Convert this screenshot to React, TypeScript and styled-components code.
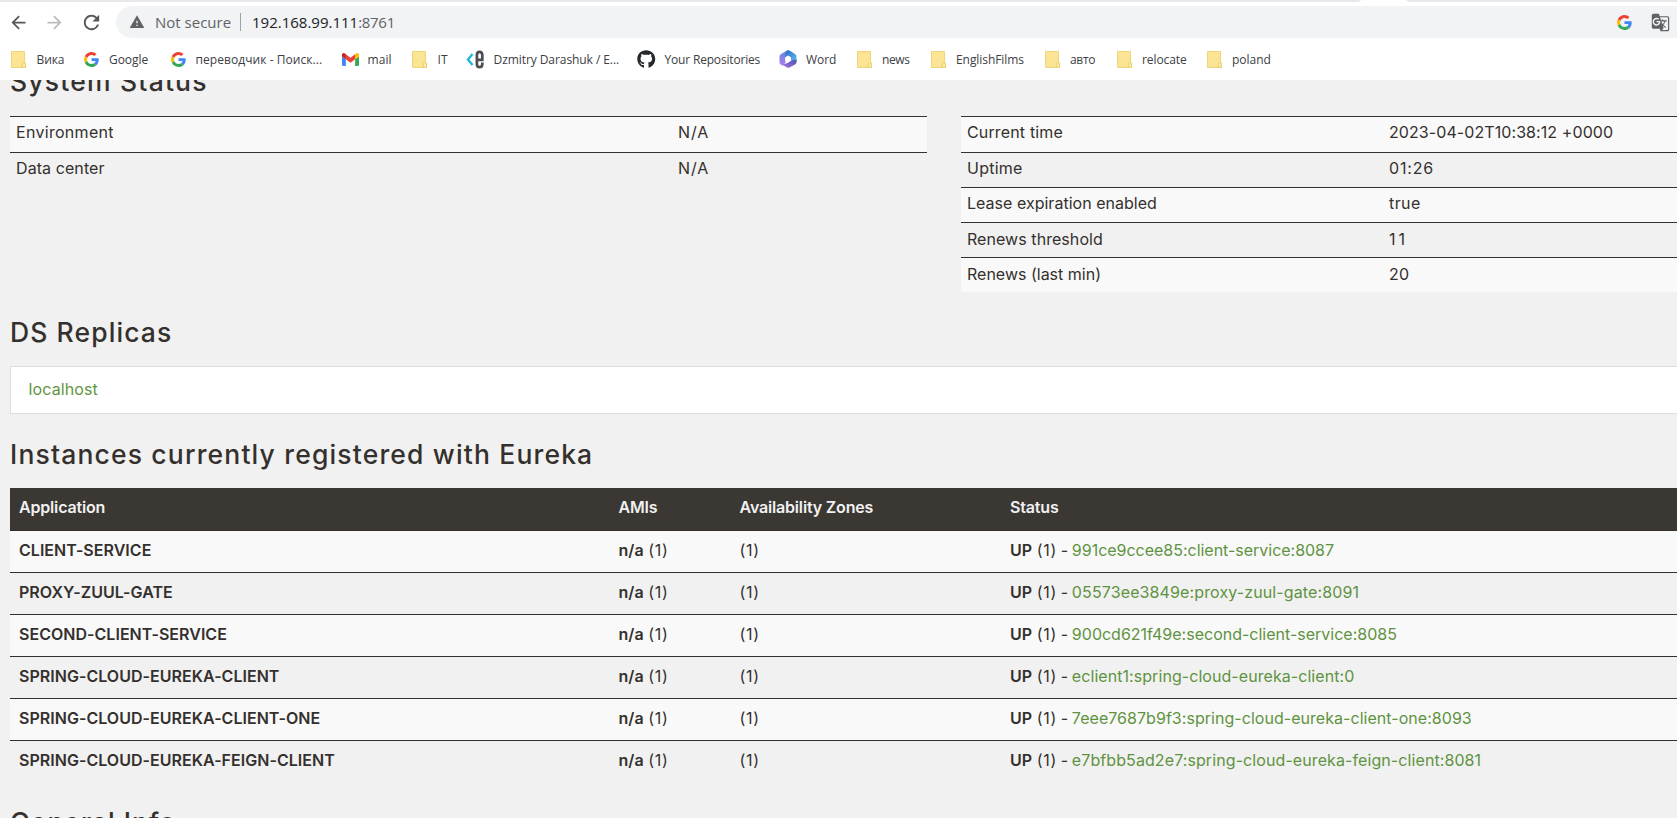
import React from "react";
import styled, { createGlobalStyle } from "styled-components";
import { MdArrowBack, MdArrowForward, MdRefresh, MdWarning, MdGTranslate } from "react-icons/md";
import { FaGithub } from "react-icons/fa";

const GlobalStyle = createGlobalStyle`
  * { box-sizing: border-box; }
  body {
    margin: 0;
    background: #f1f1f1;
    overflow: hidden;
  }
`;

const Window = styled.div`
  width: 100%;
  height: 818px;
  display: flex;
  flex-direction: column;
  overflow: hidden;
`;

/* ---------- browser chrome ---------- */

const Chrome = styled.header`
  height: 80px;
  flex: none;
  background: #fff;
  font-family: "Open Sans", "Noto Sans", sans-serif;
`;

const TabStrip = styled.div`
  display: flex;
  height: 2px;
  justify-content: space-between;
`;

const StripPart = styled.div<{ $side: "left" | "right" }>`
  width: ${(p) => (p.$side === "left" ? "1361px" : "271px")};
  background: #e7e8eb;
  border-radius: ${(p) => (p.$side === "left" ? "0 0 6px 0 / 0 0 2px 0" : "0 0 0 6px / 0 0 0 2px")};
`;

const Toolbar = styled.div`
  display: flex;
  align-items: center;
  height: 40px;
`;

const NavButton = styled.span<{ $faded?: boolean }>`
  display: flex;
  justify-content: center;
  width: 36.5px;
  color: ${(p) => (p.$faded ? "#babcbe" : "#54575b")};
`;

const NavGroup = styled.div`
  display: flex;
  align-items: center;
  width: 116px;
`;

const AddressBar = styled.div`
  display: flex;
  align-items: center;
  flex: 1;
  height: 32px;
  padding: 0 7px 0 13px;
  border-radius: 16px 0 0 16px;
  background: #f1f3f4;
  color: #5f6368;
  font-size: 15px;
  line-height: 32px;
  white-space: nowrap;
`;

const Divider = styled.i`
  width: 1px;
  height: 18px;
  margin: 0 11px 0 8px;
  background: #9fa2a6;
`;

const SecurityLabel = styled.span`
  width: 77px;
  margin-left: 10px;
`;

const Address = styled.span`
  flex: 1;
  letter-spacing: -0.3px;
`;

const Host = styled.span`
  color: #202124;
  letter-spacing: 0;
`;

const AddressActions = styled.span`
  display: flex;
  align-items: center;
  gap: 19px;
`;

const BookmarkBar = styled.nav`
  display: flex;
  height: 38px;
  padding-left: 11px;
  align-items: center;
  margin-top: -2px;
`;

const Bookmark = styled.a<{ $width: number }>`
  display: flex;
  align-items: center;
  flex: none;
  width: ${(p) => p.$width}px;
  height: 26px;
`;

const BookmarkIcon = styled.span<{ $slot: number }>`
  display: flex;
  align-items: center;
  flex: none;
  width: ${(p) => p.$slot}px;
`;

const BookmarkLabel = styled.span<{ $tracking: number }>`
  padding-top: 2px;
  font-size: 12px;
  line-height: 24px;
  white-space: nowrap;
  color: #3c4043;
  letter-spacing: ${(p) => p.$tracking}px;
`;

const GoogleIcon = () => (
  <svg width="15" height="15" viewBox="0 0 48 48">
    <path fill="#ea4335" d="M24 9.500c3.540 0 6.710 1.220 9.210 3.600l6.850-6.850C35.900 2.380 30.470 0 24 0 14.620 0 6.510 5.380 2.560 13.220l7.980 6.190C12.430 13.720 17.740 9.500 24 9.500z" />
    <path fill="#4285f4" d="M46.980 24.550c0-1.570-.15-3.090-.38-4.550H24v9.020h12.940c-.58 2.960-2.260 5.480-4.780 7.180l7.730 6c4.510-4.180 7.090-10.360 7.090-17.650z" />
    <path fill="#fbbc05" d="M10.530 28.590c-.48-1.450-.76-2.990-.76-4.590s.27-3.140.76-4.590l-7.980-6.190C.92 16.460 0 20.120 0 24c0 3.880.92 7.540 2.560 10.780l7.970-6.190z" />
    <path fill="#34a853" d="M24 48c6.480 0 11.930-2.130 15.890-5.810l-7.730-6c-2.150 1.450-4.920 2.300-8.160 2.300-6.260 0-11.570-4.220-13.470-9.910l-7.980 6.190C6.510 42.620 14.620 48 24 48z" />
  </svg>
);

const FolderIcon = () => (
  <svg width="16" height="18" viewBox="0 0 16 18">
    <path d="M.5 1.500h13v10.700l1 1v4.300H.5z" fill="#fbe594" stroke="#ecd67c" strokeWidth="1" />
    <path d="M11.400 17.400v-3.400q0-1.600 1.500-1.400 1.500 0 1.500 1.400v3.400z" fill="#fdeeb0" stroke="#e8cd62" strokeWidth=".9" />
  </svg>
);

const GmailIcon = () => (
  <svg width="17" height="13" viewBox="52 42 88 66">
    <path fill="#4285f4" d="M58 108h14V74L52 59v43c0 3.32 2.69 6 6 6" />
    <path fill="#34a853" d="M120 108h14c3.320 0 6-2.690 6-6V59l-20 15" />
    <path fill="#fbbc04" d="M120 48v26l20-15v-8c0-7.420-8.470-11.650-14.400-7.200" />
    <path fill="#ea4335" d="M72 74V48l24 18 24-18v26L96 92" />
    <path fill="#c5221f" d="M52 51v8l20 15V48l-5.600-4.200c-5.940-4.450-14.400-.22-14.400 7.200" />
  </svg>
);

const CodeIcon = () => (
  <svg width="19" height="19" viewBox="0 0 19 19" fill="none">
    <path d="M6.500 4 2 9.500l4.500 5.500" stroke="#20b9d4" strokeWidth="2.400" />
    <path
      d="M11.300 9.800h5V5q0-3.200-2.700-3.200T10.900 5v9q0 3.200 2.700 3.200t2.700-3.200v-1.500"
      stroke="#4c4d50"
      strokeWidth="2.700"
    />
  </svg>
);

const OfficeIcon = () => (
  <svg width="18" height="18" viewBox="0 0 18 18">
    <defs>
      <linearGradient id="officeTop" x1="0" y1="0" x2="1" y2="1">
        <stop offset="0" stopColor="#2c65c4" />
        <stop offset="1" stopColor="#62bdf2" />
      </linearGradient>
      <linearGradient id="officeLeft" x1="0" y1="0" x2="0" y2="1">
        <stop offset="0" stopColor="#5c88dc" />
        <stop offset="1" stopColor="#b77cf0" />
      </linearGradient>
      <linearGradient id="officeBottom" x1="0" y1="1" x2="1" y2="0">
        <stop offset="0" stopColor="#a678e4" />
        <stop offset="1" stopColor="#4651ac" />
      </linearGradient>
    </defs>
    <path d="M8 .5 2 4Q.5 5 .5 6.500v5.500Q.5 14 2 14.700l2 1.100 2.500-3.300V7.500L11 1z" fill="url(#officeLeft)" />
    <path d="M8 .5q1.300-.7 2.500 0L16 4q1.500 1 1.500 2.500V12L12 10.500V7.500L9 5.500 6 7.500 6.500 3z" fill="url(#officeTop)" />
    <path d="M17.500 9.500V12q0 1.700-1.500 2.500l-5.500 3q-1.300.7-2.500 0l-4.500-2.800 5.500-2 3-2z" fill="url(#officeBottom)" />
    <path d="m9 5.800 2.800 1.600v3.200L9 12.200l-2.800-1.600V7.400z" fill="#fff" />
  </svg>
);

type BookmarkItem = { label: string; icon: React.ReactNode; width: number; slot?: number; tracking: number };

const bookmarks: BookmarkItem[] = [
  { label: "Вика", icon: <FolderIcon />, width: 73, slot: 25.5, tracking: -0.1 },
  { label: "Google", icon: <GoogleIcon />, width: 87, slot: 25, tracking: -0.04 },
  { label: "переводчик - Поиск...", icon: <GoogleIcon />, width: 171, slot: 24.5, tracking: 0.06 },
  { label: "mail", icon: <GmailIcon />, width: 70, slot: 25.5, tracking: 0.1 },
  { label: "IT", icon: <FolderIcon />, width: 54, slot: 25.5, tracking: 0.1 },
  { label: "Dzmitry Darashuk / E...", icon: <CodeIcon />, width: 171, slot: 27.5, tracking: -0.07 },
  { label: "Your Repositories", icon: <FaGithub size={18.5} color="#24292e" />, width: 142, slot: 27.5, tracking: -0.18 },
  { label: "Word", icon: <OfficeIcon />, width: 78, slot: 27, tracking: -0.07 },
  { label: "news", icon: <FolderIcon />, width: 74, tracking: -0.4 },
  { label: "EnglishFilms", icon: <FolderIcon />, width: 114, tracking: -0.07 },
  { label: "авто", icon: <FolderIcon />, width: 72, tracking: -0.3 },
  { label: "relocate", icon: <FolderIcon />, width: 90, tracking: -0.08 },
  { label: "poland", icon: <FolderIcon />, width: 80, tracking: 0 },
];

/* ---------- Eureka dashboard ---------- */

const Page = styled.main`
  flex: 1;
  min-height: 0;
  overflow: hidden;
  padding-left: 10px;
  font-family: Inter, "Open Sans", sans-serif;
  font-size: 16px;
  color: #34302d;
`;

const Heading = styled.h1<{ $top: number; $bottom: number; $tracking: number }>`
  margin: ${(p) => p.$top}px 0 ${(p) => p.$bottom}px;
  height: 30px;
  font-size: 26.5px;
  font-weight: 500;
  line-height: 30px;
  letter-spacing: ${(p) => p.$tracking}px;
  white-space: nowrap;
`;

const StatusGrid = styled.section`
  display: grid;
  grid-template-columns: 917px 1fr;
  column-gap: 34px;
  align-items: start;
  height: 176px;
`;

const StatusList = styled.dl`
  margin: 0;
`;

const StatusRow = styled.div<{ $labelWidth: number }>`
  display: grid;
  grid-template-columns: ${(p) => p.$labelWidth}px 1fr;
  height: 35px;
  padding-left: 6px;
  border-top: 1px solid #34302d;
  line-height: 30px;
  &:nth-child(odd) { background: #f9f9f9; }
  &:first-child { height: 36px; line-height: 31px; }
  &:nth-child(n + 4) { line-height: 32px; }
`;

const StatusTerm = styled.dt<{ $tracking: number }>`
  letter-spacing: ${(p) => p.$tracking}px;
`;

const StatusValue = styled.dd<{ $tracking: number }>`
  margin: 0;
  letter-spacing: ${(p) => p.$tracking}px;
`;

const ReplicaBox = styled.section`
  height: 48px;
  padding-left: 17.5px;
  border: 1px solid #dddddd;
  border-right: 0;
  background: #fff;
  line-height: 44px;
`;

const Link = styled.a<{ $tracking: number }>`
  color: #5f9341;
  letter-spacing: ${(p) => p.$tracking}px;
`;

const InstanceTable = styled.section`
  display: flex;
  flex-direction: column;
`;

const InstanceRow = styled.div<{ $head?: boolean }>`
  display: grid;
  grid-template-columns: 599.5px 121px 270.5px 1fr;
  height: 42px;
  padding-left: 9px;
  border-bottom: 1px solid #34302d;
  line-height: 38px;
  white-space: nowrap;
  &:nth-child(even) { background: #f9f9f9; }
  &:last-child { border-bottom-color: transparent; }
  ${(p) =>
    p.$head &&
    `
    height: 43px;
    background: #3b3733;
    color: #f1f1f1;
    font-weight: 600;
    letter-spacing: -0.17px;
  `}
`;

const Cell = styled.div``;

const Strong = styled.b`
  font-weight: 600;
  letter-spacing: 0.03px;
`;

const Count = styled.span`
  letter-spacing: 0.75px;
`;

const Dash = styled.span`
  word-spacing: -0.8px;
`;

type StatusEntry = { term: string; value: string; termTracking: number; valueTracking: number };

const environment: StatusEntry[] = [
  { term: "Environment", value: "N/A", termTracking: 0.3, valueTracking: 0.9 },
  { term: "Data center", value: "N/A", termTracking: 0.08, valueTracking: 0.9 },
];

const runtime: StatusEntry[] = [
  { term: "Current time", value: "2023-04-02T10:38:12 +0000", termTracking: 0.15, valueTracking: 0.08 },
  { term: "Uptime", value: "01:26", termTracking: 0.25, valueTracking: 0.85 },
  { term: "Lease expiration enabled", value: "true", termTracking: 0.02, valueTracking: 0.4 },
  { term: "Renews threshold", value: "11", termTracking: 0.06, valueTracking: 3 },
  { term: "Renews (last min)", value: "20", termTracking: 0, valueTracking: 0.2 },
];

const instances = [
  { name: "CLIENT-SERVICE", id: "991ce9ccee85:client-service:8087", tracking: -0.02 },
  { name: "PROXY-ZUUL-GATE", id: "05573ee3849e:proxy-zuul-gate:8091", tracking: 0.12 },
  { name: "SECOND-CLIENT-SERVICE", id: "900cd621f49e:second-client-service:8085", tracking: 0 },
  { name: "SPRING-CLOUD-EUREKA-CLIENT", id: "eclient1:spring-cloud-eureka-client:0", tracking: 0.06 },
  { name: "SPRING-CLOUD-EUREKA-CLIENT-ONE", id: "7eee7687b9f3:spring-cloud-eureka-client-one:8093", tracking: 0.04 },
  { name: "SPRING-CLOUD-EUREKA-FEIGN-CLIENT", id: "e7bfbb5ad2e7:spring-cloud-eureka-feign-client:8081", tracking: 0.09 },
];

const Status = ({ rows, labelWidth }: { rows: StatusEntry[]; labelWidth: number }) => (
  <StatusList>
    {rows.map((r) => (
      <StatusRow key={r.term} $labelWidth={labelWidth}>
        <StatusTerm $tracking={r.termTracking}>{r.term}</StatusTerm>
        <StatusValue $tracking={r.valueTracking}>{r.value}</StatusValue>
      </StatusRow>
    ))}
  </StatusList>
);

export default function App() {
  return (
    <Window>
      <GlobalStyle />
      <Chrome>
        <TabStrip>
          <StripPart $side="left" />
          <StripPart $side="right" />
        </TabStrip>
        <Toolbar>
          <NavGroup>
            <NavButton><MdArrowBack size={21} /></NavButton>
            <NavButton $faded><MdArrowForward size={21} /></NavButton>
            <NavButton><MdRefresh size={23} /></NavButton>
          </NavGroup>
          <AddressBar>
            <MdWarning size={16} />
            <SecurityLabel>Not secure</SecurityLabel>
            <Divider />
            <Address>
              <Host>192.168.99.111</Host>:8761
            </Address>
            <AddressActions>
              <GoogleIcon />
              <MdGTranslate size={19} />
            </AddressActions>
          </AddressBar>
        </Toolbar>
        <BookmarkBar>
          {bookmarks.map((b) => (
            <Bookmark key={b.label} $width={b.width}>
              <BookmarkIcon $slot={b.slot ?? 25}>{b.icon}</BookmarkIcon>
              <BookmarkLabel $tracking={b.tracking}>{b.label}</BookmarkLabel>
            </Bookmark>
          ))}
        </BookmarkBar>
      </Chrome>
      <Page>
        <Heading $top={-14} $bottom={20} $tracking={1.2}>System Status</Heading>
        <StatusGrid>
          <Status rows={environment} labelWidth={662} />
          <Status rows={runtime} labelWidth={422} />
        </StatusGrid>
        <Heading $top={25} $bottom={19} $tracking={1.1}>DS Replicas</Heading>
        <ReplicaBox><Link $tracking={0.12}>localhost</Link></ReplicaBox>
        <Heading $top={25} $bottom={19} $tracking={1.16}>Instances currently registered with Eureka</Heading>
        <InstanceTable>
          <InstanceRow $head>
            <Cell>Application</Cell>
            <Cell>AMIs</Cell>
            <Cell>Availability Zones</Cell>
            <Cell>Status</Cell>
          </InstanceRow>
          {instances.map((app) => (
            <InstanceRow key={app.name}>
              <Cell><Strong>{app.name}</Strong></Cell>
              <Cell><Strong>n/a</Strong> <Count>(1)</Count></Cell>
              <Cell><Count>(1)</Count></Cell>
              <Cell>
                <Strong>UP</Strong> <Count>(1)</Count><Dash> - </Dash>
                <Link $tracking={app.tracking}>{app.id}</Link>
              </Cell>
            </InstanceRow>
          ))}
        </InstanceTable>
        <Heading $top={24} $bottom={0} $tracking={1}>General Info</Heading>
      </Page>
    </Window>
  );
}
